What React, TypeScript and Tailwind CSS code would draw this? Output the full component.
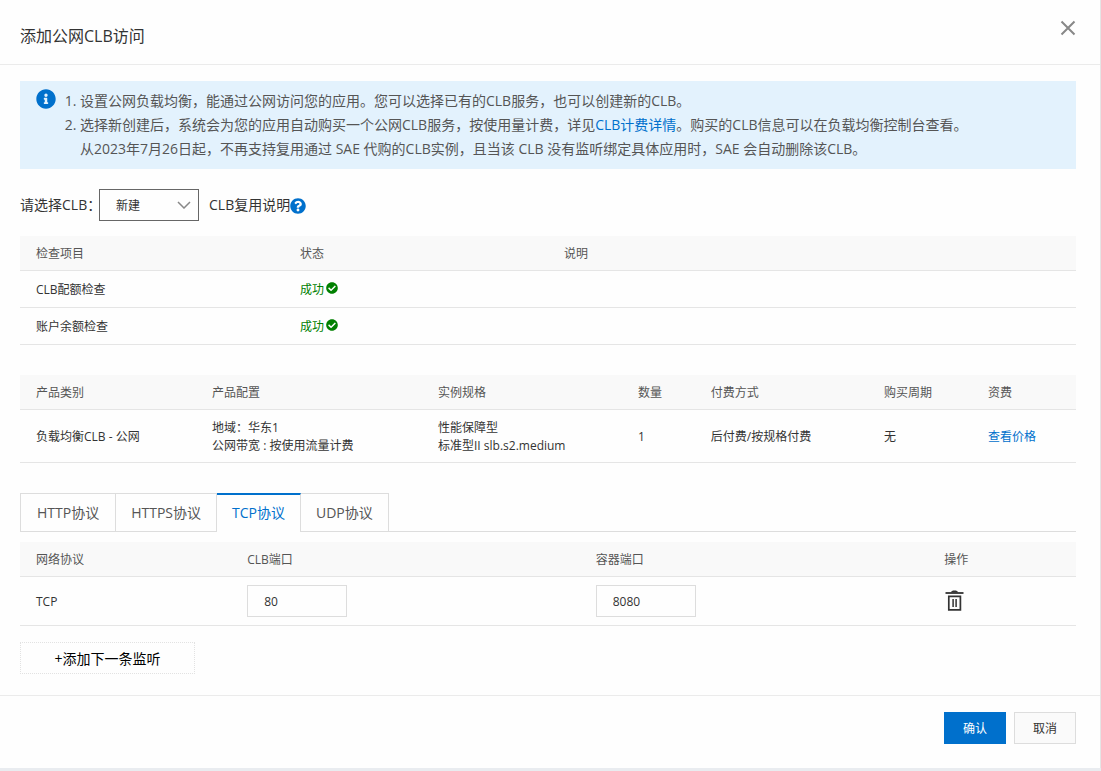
import React, { useState } from "react";
import { FaCheckCircle, FaInfoCircle, FaQuestionCircle } from "react-icons/fa";

const TABS = ["HTTP协议", "HTTPS协议", "TCP协议", "UDP协议"];
const CHECKS = ["CLB配额检查", "账户余额检查"];

function Th({ children, width }: { children: React.ReactNode; width: string }) {
  return (
    <th
      scope="col"
      className={`h-[35px] border-b border-[#e5e5e5] bg-[#f9f9f9] px-4 pt-0.5 text-left font-normal text-[#555] ${width}`}
    >
      {children}
    </th>
  );
}

function Td({ children, className = "pt-0.5" }: { children?: React.ReactNode; className?: string }) {
  return <td className={`border-b border-[#e5e5e5] px-4 ${className}`}>{children}</td>;
}

function CloseIcon() {
  return (
    <svg viewBox="0 0 16 16" className="size-4" fill="none" stroke="#888" strokeWidth="2" aria-hidden="true">
      <path d="M1.5 1.5 14.5 14.5M14.5 1.5 1.5 14.5" />
    </svg>
  );
}

function TrashIcon() {
  return (
    <svg viewBox="0 0 20 22" className="h-[22px] w-5" fill="none" stroke="#333" aria-hidden="true">
      <path d="M7 2.5C7.2 1 8.4.5 10.5.5s3.3.5 3.5 2z" fill="#333" stroke="none" />
      <path d="M1.5 3h18" strokeWidth="1.8" />
      <path d="M4.8 6.4h11.6v13.4H4.8z" strokeWidth="1.7" />
      <path d="M9.1 9v8M12.1 9v8" strokeWidth="1.5" />
    </svg>
  );
}

export default function App() {
  const [tab, setTab] = useState(2);

  return (
    <div className="min-h-screen bg-[#e9ecf0] pb-[3px] font-['Open_Sans','Noto_Sans_CJK_SC',sans-serif] text-xs text-[#333]">
      <div role="dialog" aria-labelledby="title" className="border-r border-[#e5e5e5] bg-[#fefefe]">
        <header className="flex h-[65px] items-start justify-between border-b border-[#ebebeb] pl-5 pr-6">
          <h1 id="title" className="pt-6 text-base leading-6">添加公网CLB访问</h1>
          <button type="button" aria-label="关闭" className="mt-5">
            <CloseIcon />
          </button>
        </header>

        <main className="px-5 pb-[21px] pr-6 pt-4">
          <section className="flex bg-[#e3f2fd] px-4 py-2 text-sm leading-6 text-[#555]">
            <FaInfoCircle className="size-5 shrink-0 text-[#0070cc]" />
            <ol className="ml-6 list-decimal">
              <li>设置公网负载均衡，能通过公网访问您的应用。您可以选择已有的CLB服务，也可以创建新的CLB。</li>
              <li>
                选择新创建后，系统会为您的应用自动购买一个公网CLB服务，按使用量计费，详见
                <a href="#pricing" className="text-[#0070cc]">CLB计费详情</a>
                。购买的CLB信息可以在负载均衡控制台查看。
                <br />
                从2023年7月26日起，不再支持复用通过 SAE 代购的CLB实例，且当该 CLB 没有监听绑定具体应用时，SAE 会自动删除该CLB。
              </li>
            </ol>
          </section>

          <div className="mt-5 flex h-8 items-center text-sm">
            <label htmlFor="clb" className="w-[79px] whitespace-nowrap">请选择CLB：</label>
            <div className="relative">
              <select
                id="clb"
                className="block h-8 w-[100px] appearance-none border border-[#666] bg-[#fefefe] px-4 pt-0.5 text-xs"
              >
                <option>新建</option>
              </select>
              <svg
                viewBox="0 0 14 8"
                className="pointer-events-none absolute right-2 top-3 h-2 w-3.5"
                fill="none"
                stroke="#888"
                strokeWidth="1.5"
                aria-hidden="true"
              >
                <path d="M1 1l6 6 6-6" />
              </svg>
            </div>
            <span className="ml-2.5">CLB复用说明</span>
            <FaQuestionCircle className="mt-0.5 size-4 text-[#0070cc]" />
          </div>

          <table className="mt-[15px] w-full table-fixed border-separate border-spacing-0">
            <thead>
              <tr>
                <Th width="w-[25%]">检查项目</Th>
                <Th width="w-[25%]">状态</Th>
                <Th width="w-[50%]">说明</Th>
              </tr>
            </thead>
            <tbody>
              {CHECKS.map((name) => (
                <tr key={name} className="h-[37px]">
                  <Td>{name}</Td>
                  <Td className="pt-0.5 text-[#008000]">
                    <span className="flex items-center gap-0.5">
                      成功
                      <FaCheckCircle className="mb-1 size-3" />
                    </span>
                  </Td>
                  <Td />
                </tr>
              ))}
            </tbody>
          </table>

          <table className="mt-[30px] w-full table-fixed border-separate border-spacing-0 leading-[18px]">
            <thead>
              <tr>
                <Th width="w-[16.67%]">产品类别</Th>
                <Th width="w-[21.4%]">产品配置</Th>
                <Th width="w-[18.93%]">实例规格</Th>
                <Th width="w-[6.9%]">数量</Th>
                <Th width="w-[16.4%]">付费方式</Th>
                <Th width="w-[9.85%]">购买周期</Th>
                <Th width="w-[9.85%]">资费</Th>
              </tr>
            </thead>
            <tbody>
              <tr className="h-[53px]">
                <Td>负载均衡CLB - 公网</Td>
                <Td>地域：华东1<br />公网带宽 : 按使用流量计费</Td>
                <Td>性能保障型<br />标准型II slb.s2.medium</Td>
                <Td>1</Td>
                <Td>后付费/按规格付费</Td>
                <Td>无</Td>
                <Td>
                  <a href="#price" className="text-[#0070cc]">查看价格</a>
                </Td>
              </tr>
            </tbody>
          </table>

          <div role="tablist" className="mt-[30px] flex h-[39px] border-b border-[#ddd] text-sm">
            {TABS.map((name, i) => (
              <button
                key={name}
                type="button"
                role="tab"
                aria-selected={tab === i}
                onClick={() => setTab(i)}
                className={
                  tab === i
                    ? "-mb-px border-r border-t-2 border-r-[#ddd] border-t-[#0070cc] bg-[#fefefe] px-[15px] pb-0.5 text-[#0070cc]"
                    : "border-r border-t border-[#ddd] px-[15px] text-[#555] first:border-l first:px-4"
                }
              >
                {name}
              </button>
            ))}
          </div>

          <table className="mt-2.5 w-full table-fixed border-separate border-spacing-0">
            <thead>
              <tr>
                <Th width="w-[20%]">网络协议</Th>
                <Th width="w-[33%]">CLB端口</Th>
                <Th width="w-[33%]">容器端口</Th>
                <Th width="w-[14%]">操作</Th>
              </tr>
            </thead>
            <tbody>
              <tr className="h-[49px]">
                <Td>TCP</Td>
                <Td className="">
                  <input aria-label="CLB端口" defaultValue="80" className="block h-8 w-[100px] border border-[#ddd] px-4" />
                </Td>
                <Td className="">
                  <input aria-label="容器端口" defaultValue="8080" className="block h-8 w-[100px] border border-[#ddd] px-4" />
                </Td>
                <Td className="">
                  <button type="button" aria-label="删除" className="block">
                    <TrashIcon />
                  </button>
                </Td>
              </tr>
            </tbody>
          </table>

          <button
            type="button"
            className="mt-4 block h-8 w-[175px] border border-dotted border-[#e2e2e2] pt-0.5 text-sm text-black"
          >
            +添加下一条监听
          </button>
        </main>

        <footer className="flex justify-end gap-2 border-t border-[#ebebeb] pb-6 pr-6 pt-4">
          <button type="button" className="h-8 w-[62px] bg-[#0070cc] pt-0.5 text-white">确认</button>
          <button type="button" className="h-8 w-[62px] border border-[#ddd] bg-[#fafafa] pt-0.5">取消</button>
        </footer>
      </div>
    </div>
  );
}
